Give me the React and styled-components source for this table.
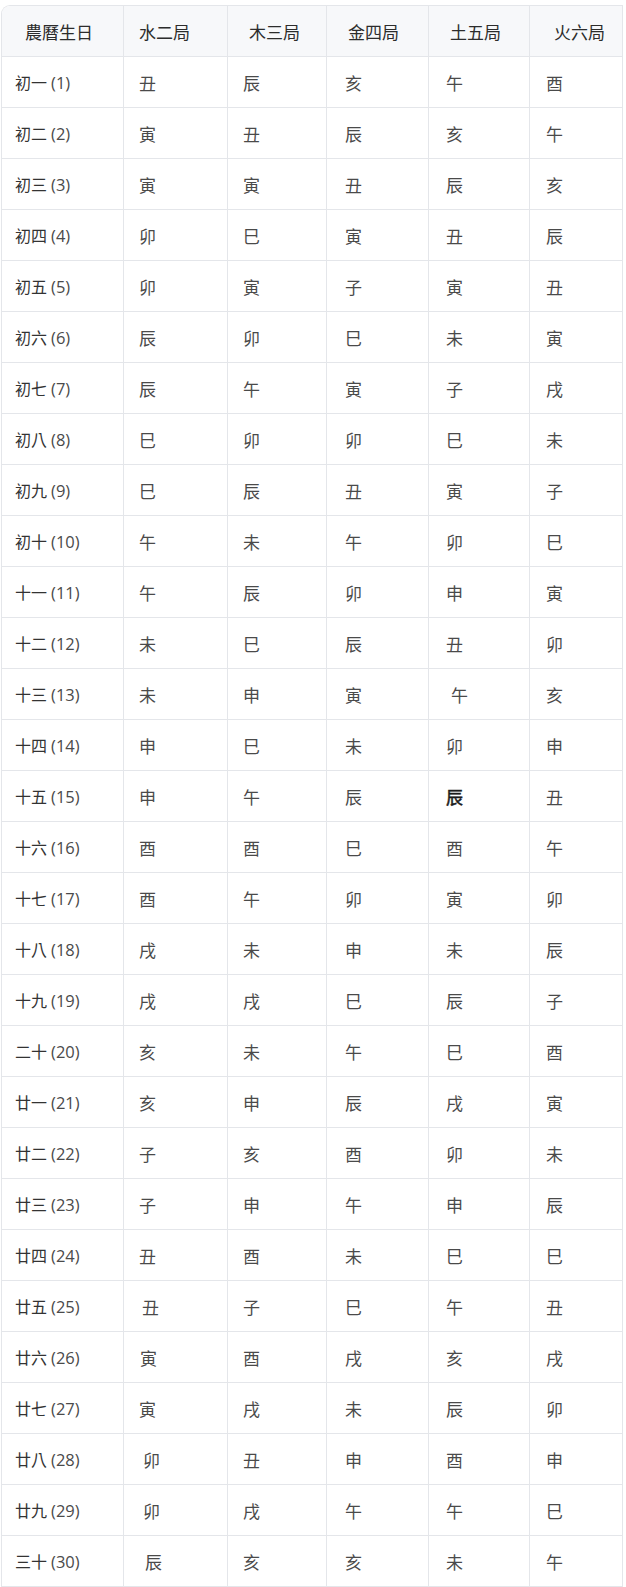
import React from "react";
import styled, { createGlobalStyle } from "styled-components";

const Global = createGlobalStyle`
  html, body { margin: 0; padding: 0; background: #ffffff; }
  body { font-family: "Noto Sans", "Noto Sans CJK TC", sans-serif; }
`;

const Page = styled.div`
  padding: 5px 0 0 1px;
`;

const Table = styled.table`
  width: 621px;
  table-layout: fixed;
  border-collapse: separate;
  border-spacing: 0;
  border-top: 1px solid #e4e6ea;
  border-left: 1px solid #e4e6ea;
  border-top-left-radius: 9px;
  overflow: hidden;
`;

const Col = styled.col`
  width: ${(p) => p.$w}px;
`;

const HeadCell = styled.th`
  height: 50px;
  padding: 0 0 0 ${(p) => p.$pad}px;
  text-align: left;
  font-weight: 400;
  font-size: 17px;
  color: #2c2c2c;
  background: #f7f8fa;
  border-right: 1px solid #e4e6ea;
  border-bottom: 1px solid #e4e6ea;
  font-family: "Noto Sans CJK TC", sans-serif;
  &:first-child { border-top-left-radius: 8px; }
`;

const DayCell = styled.td`
  height: 50px;
  padding: 0 0 0 13px;
  font-size: 16px;
  color: #333333;
  border-right: 1px solid #e4e6ea;
  border-bottom: 1px solid #e4e6ea;
  white-space: nowrap;
  font-family: "Noto Sans CJK TC", sans-serif;
`;

const Num = styled.span`
  margin-left: 4px;
  font-family: "Open Sans", "Noto Sans", sans-serif;
  font-weight: 400;
  font-size: 16.5px;
  color: #4a4a4a;
`;

const Cell = styled.td`
  height: 50px;
  padding: 0 0 0 ${(p) => p.$pad}px;
  font-size: 17px;
  color: ${(p) => (p.$bold ? "#1c1c1c" : "#4a4a4a")};
  font-weight: 400;
  -webkit-text-stroke: ${(p) => (p.$bold ? "0.5px #1c1c1c" : "0")};
  font-family: "Noto Sans CJK TC", sans-serif;
  border-right: 1px solid #e4e6ea;
  border-bottom: 1px solid #e4e6ea;
`;

const widths = [122, 104, 99, 102, 101, 93];

const headers = [
  ["農曆生日", 23],
  ["水二局", 15],
  ["木三局", 21],
  ["金四局", 21],
  ["土五局", 21],
  ["火六局", 24],
];

const basePad = [15, 15, 18, 17, 16];

const rows = [
  ["初一", "(1)", "丑辰亥午酉"],
  ["初二", "(2)", "寅丑辰亥午"],
  ["初三", "(3)", "寅寅丑辰亥"],
  ["初四", "(4)", "卯巳寅丑辰"],
  ["初五", "(5)", "卯寅子寅丑"],
  ["初六", "(6)", "辰卯巳未寅"],
  ["初七", "(7)", "辰午寅子戌"],
  ["初八", "(8)", "巳卯卯巳未"],
  ["初九", "(9)", "巳辰丑寅子"],
  ["初十", "(10)", "午未午卯巳"],
  ["十一", "(11)", "午辰卯申寅"],
  ["十二", "(12)", "未巳辰丑卯"],
  ["十三", "(13)", "未申寅午亥"],
  ["十四", "(14)", "申巳未卯申"],
  ["十五", "(15)", "申午辰辰丑"],
  ["十六", "(16)", "酉酉巳酉午"],
  ["十七", "(17)", "酉午卯寅卯"],
  ["十八", "(18)", "戌未申未辰"],
  ["十九", "(19)", "戌戌巳辰子"],
  ["二十", "(20)", "亥未午巳酉"],
  ["廿一", "(21)", "亥申辰戌寅"],
  ["廿二", "(22)", "子亥酉卯未"],
  ["廿三", "(23)", "子申午申辰"],
  ["廿四", "(24)", "丑酉未巳巳"],
  ["廿五", "(25)", "丑子巳午丑"],
  ["廿六", "(26)", "寅酉戌亥戌"],
  ["廿七", "(27)", "寅戌未辰卯"],
  ["廿八", "(28)", "卯丑申酉申"],
  ["廿九", "(29)", "卯戌午午巳"],
  ["三十", "(30)", "辰亥亥未午"],
];

// small per-cell indent differences seen in the reference
const extra = {
  "12-3": 5,
  "24-0": 3,
  "25-0": 1,
  "27-0": 4,
  "28-0": 4,
  "29-0": 6,
};

const bold = { "14-3": true };

export default function App() {
  return (
    <>
      <Global />
      <Page>
        <Table>
          <colgroup>
            {widths.map((w, i) => (
              <Col key={i} $w={w} />
            ))}
          </colgroup>
          <thead>
            <tr>
              {headers.map(([h, pad]) => (
                <HeadCell key={h} $pad={pad}>
                  {h}
                </HeadCell>
              ))}
            </tr>
          </thead>
          <tbody>
            {rows.map(([day, num, vals], r) => (
              <tr key={day}>
                <DayCell>
                  {day}
                  <Num>{num}</Num>
                </DayCell>
                {Array.from(vals).map((v, c) => (
                  <Cell
                    key={c}
                    $pad={basePad[c] + (extra[`${r}-${c}`] || 0)}
                    $bold={bold[`${r}-${c}`]}
                  >
                    {v}
                  </Cell>
                ))}
              </tr>
            ))}
          </tbody>
        </Table>
      </Page>
    </>
  );
}
